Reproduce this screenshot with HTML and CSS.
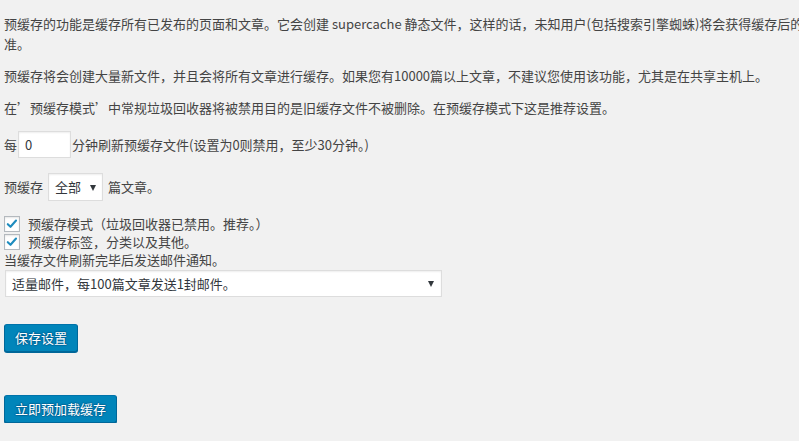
FILE: index.html
```html
<!DOCTYPE html>
<html lang="zh-CN">
<head>
<meta charset="utf-8">
<title>预缓存</title>
<link rel="stylesheet" href="styles.css">
</head>
<body>
<div class="wrap">
  <p class="para">预缓存的功能是缓存所有已发布的页面和文章。它会创建 supercache 静态文件，这样的话，未知用户(包括搜索引擎蜘蛛)将会获得缓存后的准。</p>
  <p class="para">预缓存将会创建大量新文件，并且会将所有文章进行缓存。如果您有10000篇以上文章，不建议您使用该功能，尤其是在共享主机上。</p>
  <p class="para">在’预缓存模式’中常规垃圾回收器将被禁用目的是旧缓存文件不被删除。在预缓存模式下这是推荐设置。</p>

  <div class="row row-interval">
    <span>每</span>
    <span class="input">0</span>
    <span>分钟刷新预缓存文件(设置为0则禁用，至少30分钟。)</span>
  </div>

  <div class="row row-count">
    <span>预缓存</span>
    <span class="select select-small"><span>全部</span><span class="arrow"></span></span>
    <span>篇文章。</span>
  </div>

  <div class="checks">
    <label class="check"><span class="box"><svg viewBox="0 0 16 16" width="16" height="16"><path d="M3.2 8.2 L6.3 11.2 L12.6 4" fill="none" stroke="#1e8cbe" stroke-width="2.4" stroke-linecap="round" stroke-linejoin="round"/></svg></span><span>预缓存模式（垃圾回收器已禁用。推荐。）</span></label>
    <label class="check"><span class="box"><svg viewBox="0 0 16 16" width="16" height="16"><path d="M3.2 8.2 L6.3 11.2 L12.6 4" fill="none" stroke="#1e8cbe" stroke-width="2.4" stroke-linecap="round" stroke-linejoin="round"/></svg></span><span>预缓存标签，分类以及其他。</span></label>
    <div class="line">当缓存文件刷新完毕后发送邮件通知。</div>
    <div class="select select-wide"><span>适量邮件，每100篇文章发送1封邮件。</span><span class="arrow"></span></div>
  </div>

  <div class="actions">
    <button class="button-primary save">保存设置</button>
  </div>
  <div class="actions preload">
    <button class="button-primary">立即预加载缓存</button>
  </div>
</div>
</body>
</html>
```

FILE: styles.css
```css
html, body {
  margin: 0;
  padding: 0;
  background: #f1f1f1;
  overflow: hidden;
}

body {
  color: #444;
  font-family: "Noto Sans CJK SC", "Microsoft YaHei", sans-serif;
  font-size: 13px;
  line-height: 20px;
}

.wrap {
  padding: 2px 0 0 4px;
  width: 800px;
}

.para {
  margin: 12px 0;
}

.row {
  display: flex;
  align-items: center;
  white-space: nowrap;
}

.row-interval {
  margin-top: 12px;
  height: 29px;
}

.row-count {
  margin-top: 13px;
  height: 30px;
  gap: 5px;
}

.input {
  box-sizing: border-box;
  width: 53px;
  height: 27px;
  margin: 0 1px;
  padding: 0 6px;
  line-height: 25px;
  background: #fff;
  border: 1px solid #ddd;
  box-shadow: inset 0 1px 2px rgba(0, 0, 0, 0.07);
  color: #32373c;
}

.select {
  box-sizing: border-box;
  display: flex;
  align-items: center;
  justify-content: space-between;
  background: #fff;
  border: 1px solid #ddd;
  box-shadow: inset 0 1px 2px rgba(0, 0, 0, 0.07);
  color: #32373c;
}

.select-small {
  width: 55px;
  height: 28px;
  padding: 0 6px 0 6px;
}

.select-wide {
  width: 437px;
  height: 27px;
  margin-left: 1px;
  padding: 0 7px 0 6px;
}

.arrow {
  width: 0;
  height: 0;
  border-left: 3.5px solid transparent;
  border-right: 3.5px solid transparent;
  border-top: 6px solid #32373c;
  margin-top: 1px;
}

.checks {
  margin-top: 13px;
}

.check {
  display: flex;
  align-items: center;
  gap: 8px;
  height: 18px;
}

.box {
  box-sizing: border-box;
  width: 16px;
  height: 16px;
  background: #fff;
  border: 1px solid #b4b9be;
  box-shadow: inset 0 1px 2px rgba(0, 0, 0, 0.1);
  display: flex;
  align-items: center;
  justify-content: center;
}

.box svg {
  display: block;
  width: 14px;
  height: 14px;
}

.line {
  height: 18px;
  line-height: 18px;
  margin-bottom: 1px;
}

.actions {
  margin-top: 27px;
}

.actions.preload {
  margin-top: 43px;
}

.button-primary {
  box-sizing: border-box;
  height: 28px;
  padding: 0 10px 1px;
  margin: 0;
  font-family: "Noto Sans CJK SC", "Microsoft YaHei", sans-serif;
  font-size: 13px;
  line-height: 26px;
  color: #fff;
  background: #0085ba;
  border: 1px solid;
  border-color: #0073aa #006799 #006799;
  border-radius: 3px;
  box-shadow: 0 1px 0 #006799;
  text-shadow: 0 -1px 1px #006799, 1px 0 1px #006799, 0 1px 1px #006799, -1px 0 1px #006799;
  cursor: pointer;
}
```
